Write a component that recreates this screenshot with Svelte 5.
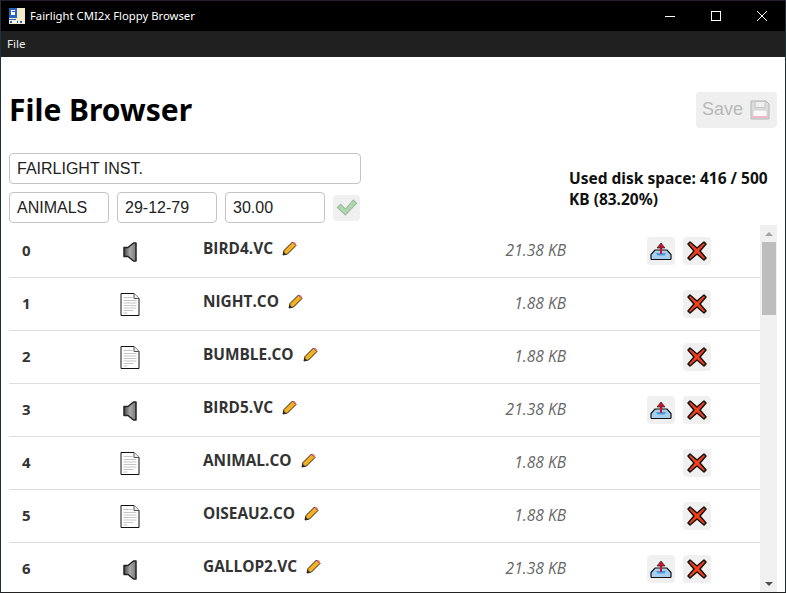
<script>
  const files = [
    { n: 0, name: 'BIRD4.VC', size: '21.38 KB', voice: true },
    { n: 1, name: 'NIGHT.CO', size: '1.88 KB', voice: false },
    { n: 2, name: 'BUMBLE.CO', size: '1.88 KB', voice: false },
    { n: 3, name: 'BIRD5.VC', size: '21.38 KB', voice: true },
    { n: 4, name: 'ANIMAL.CO', size: '1.88 KB', voice: false },
    { n: 5, name: 'OISEAU2.CO', size: '1.88 KB', voice: false },
    { n: 6, name: 'GALLOP2.VC', size: '21.38 KB', voice: true }
  ];
</script>

<div class="window">
  <header class="titlebar">
    <svg class="appicon" width="16" height="16" viewBox="0 0 16 16">
      <rect width="16" height="16" fill="#f3eccb" />
      <rect width="8" height="10" fill="#2a62c0" />
      <path d="M2 2h4v1H3v1h3v3H2M0 11h2v2H0zM4 11h3v1H4zM3 13h4v2H3zM9 14h2v1H9zM13 14h2v1h-2z" fill="#fff" />
      <path d="M0 11h7v1H0zM1 13h2v2H1zM8 13h1v2H8zM11 13h2v2h-2z" fill="#2a62c0" />
    </svg>
    <span class="wintitle">Fairlight CMI2x Floppy Browser</span>
    <div class="winbtns">
      <svg width="46" height="31" viewBox="0 0 46 31"><path d="M18 15.500h10" stroke="#fff" /></svg>
      <svg width="46" height="31" viewBox="0 0 46 31"><rect x="18.500" y="10.500" width="9" height="9" fill="none" stroke="#fff" /></svg>
      <svg width="46" height="31" viewBox="0 0 46 31"><path d="M18 10l10 10M28 10l-10 10" stroke="#fff" /></svg>
    </div>
  </header>
  <nav class="menubar"><span>File</span></nav>

  <main class="content">
    <div class="head">
      <h1>File Browser</h1>
      <button class="save" disabled>
        <span>Save</span>
        <svg width="20" height="20" viewBox="0 0 20 20">
          <path d="M1 1h15l3 3v15H1z" fill="#dcdcdc" stroke="#b4b4b4" />
          <rect x="5" y="1.500" width="10" height="6" fill="#efefef" stroke="#c4c4c4" />
          <rect x="3" y="10" width="14" height="8" fill="#f8f8f8" stroke="#cfcfcf" />
          <rect x="2" y="16" width="16" height="2" fill="#eeb8cc" />
        </svg>
      </button>
    </div>

    <div class="meta">
      <div class="fields">
        <input class="wide" value="FAIRLIGHT INST." />
        <div class="line">
          <input value="ANIMALS" />
          <input value="29-12-79" />
          <input value="30.00" />
          <button class="iconbtn check" disabled aria-label="Confirm">
            <svg width="22" height="17" viewBox="0 0 20 16">
              <path d="M1 8l3-3 4.500 4.500L16 1l3 3L8.500 15z" fill="#a9dba9" stroke="#a5b5a5" stroke-width="1" />
            </svg>
          </button>
        </div>
      </div>
      <p class="used">Used disk space: 416 / 500 KB (83.20%)</p>
    </div>

    <div class="listwrap">
      <div class="list">
        {#each files as f}
          <div class="row">
            <span class="idx">{f.n}</span>
            <span class="type">
              {#if f.voice}
                <svg width="14" height="20" viewBox="0 0 14 20">
                  <defs>
                    <linearGradient id="spk{f.n}" x1="0" x2="1" y1="0" y2="0">
                      <stop offset="0" stop-color="#444" /><stop offset="0.5" stop-color="#aaa" /><stop offset="1" stop-color="#777" />
                    </linearGradient>
                  </defs>
                  <path d="M1 5.500h4L10.500 1H13v18h-2.500L5 14.500H1z" fill="url(#spk{f.n})" stroke="#222" stroke-width="1.500" stroke-linejoin="round" />
                </svg>
              {:else}
                <svg width="20" height="23" viewBox="0 0 20 23">
                  <path d="M1 .5h13l5 5v17H1z" fill="#fff" stroke="#111" />
                  <path d="M14 .5v5h5" fill="#eee" stroke="#555" />
                  <path d="M3.500 4.500h9M3.500 7.500h13M3.500 10h13M3.500 12.500h13M3.500 15h13M3.500 17.500h10M3.500 20h4" stroke="#c6c6c6" />
                </svg>
              {/if}
            </span>
            <span class="name">
              <b>{f.name}</b>
              <svg width="15" height="15" viewBox="0 0 15 15">
                <path d="M1 14l1-4.500L10.500 1l3.500 3.500L5.500 13z" fill="#f4b01e" stroke="#222" stroke-width="1" stroke-linejoin="round" />
                <path d="M10.500 1.500l3 3 .8-1.500-2.300-2.300z" fill="#e2687e" />
                <path d="M1 14l.8-3 2.200 2.200z" fill="#222" />
              </svg>
            </span>
            <span class="size">{f.size}</span>
            <span class="actions">
              {#if f.voice}
                <button class="iconbtn" aria-label="Export">
                  <svg width="22" height="18" viewBox="0 0 22 18">
                    <path d="M1 16.500v-4L5 8h12l4 4.500v4q0 1-1 1H2q-1 0-1-1z" fill="#a8d0ee" stroke="#111" stroke-width="1.200" />
                    <path d="M6 11h10l-1.500 2.500h-7z" fill="#4a9be0" />
                    <path d="M11 12V5" stroke="#d3122a" stroke-width="2" />
                    <path d="M7 6l4-5 4 5z" fill="#d3122a" stroke="#222" stroke-width=".7" />
                  </svg>
                </button>
              {/if}
              <button class="iconbtn" aria-label="Delete">
                <svg width="20" height="20" viewBox="0 0 20 20">
                  <path d="M3 1l7 6 7-6 2 2-6 7 6 7-2 2-7-6-7 6-2-2 6-7-6-7z" fill="#f4401a" stroke="#111" stroke-width="1.500" stroke-linejoin="round" />
                </svg>
              </button>
            </span>
          </div>
        {/each}
      </div>
      <div class="scrollbar">
        <span class="arrow up"></span>
        <span class="thumb"></span>
        <span class="arrow down"></span>
      </div>
    </div>
  </main>
</div>

<style>
  :global(body) { margin: 0; background: #1d1d22; }
  .window { width: 786px; height: 593px; display: flex; flex-direction: column; overflow: hidden; box-sizing: border-box; border: 1px solid #1f2f3a; border-top-color: #2a1c30; border-bottom-color: #222; }
  .titlebar { height: 30px; flex: none; background: #000; display: flex; align-items: center; padding-left: 8px; }
  .appicon { flex: none; }
  .wintitle { margin-left: 5px; margin-bottom: 2px; color: #fff; font: 11.300px "Noto Sans", sans-serif; }
  .winbtns { margin-left: auto; display: flex; }
  .winbtns svg { display: block; }
  .menubar { height: 26px; flex: none; background: #202020; display: flex; align-items: center; padding: 0 0 2px 6px; box-sizing: border-box; color: #eee; font: 11.500px "Noto Sans", sans-serif; }
  .content { flex: 1; background: #fff; display: flex; flex-direction: column; padding: 0 8px; min-height: 0; }
  .head { display: flex; justify-content: space-between; align-items: center; padding-top: 34px; height: 37px; flex: none; }
  h1 { margin: 0; font: 700 30px/37px "Noto Sans", sans-serif; color: #000; }
  .save { height: 36px; width: 81px; border: none; border-radius: 4px; background: #efefef; color: #b8b8b8; font: 18px "Liberation Sans", sans-serif; display: flex; align-items: center; justify-content: center; gap: 7px; padding: 0 1px 0 0; }
  .meta { display: flex; margin-top: 25px; flex: none; }
  .fields { width: 352px; display: flex; flex-direction: column; gap: 8px; }
  input { box-sizing: border-box; height: 31px; width: 100px; border: 1px solid #c4c4c4; border-radius: 4px; padding: 0 7px; color: #222; background: #fff; font: 16px "Liberation Sans", sans-serif; outline: none; }
  .wide { width: 352px; }
  .line { display: flex; gap: 8px; align-items: center; }
  .used { margin: 15px 0 0 208px; width: 206px; font: 700 15.500px/21px "Noto Sans", sans-serif; color: #111; }
  .listwrap { display: flex; margin-top: 2px; flex: 1; min-height: 0; width: 768px; }
  .list { width: 751px; flex: none; overflow: hidden; }
  .row { height: 53px; box-sizing: border-box; display: flex; align-items: center; border-bottom: 1px solid #dedede; color: #333; font-family: "Open Sans", sans-serif; }
  .idx { width: 92px; flex: none; padding-left: 13px; box-sizing: border-box; font-weight: 700; font-size: 15px; line-height: 20px; padding-bottom: 2px; }
  .type { width: 58px; flex: none; display: flex; justify-content: center; padding-top: 1px; }
  .name { width: 252px; flex: none; margin-left: 44px; display: flex; align-items: center; gap: 9px; padding-bottom: 5px; }
  .name b { font-weight: 700; font-size: 15.400px; }
  .size { width: 111px; flex: none; text-align: right; font-style: italic; font-size: 15.600px; color: #666; padding-bottom: 3px; }
  .actions { margin-left: 81px; width: 64px; flex: none; display: flex; justify-content: flex-end; gap: 8px; }
  .iconbtn { width: 28px; height: 28px; padding: 0; border: none; border-radius: 4px; background: #f0f0f0; display: flex; align-items: center; justify-content: center; }
  .check { width: 27px; height: 26px; }
  .scrollbar { width: 17px; flex: none; background: #f0f0f0; display: flex; flex-direction: column; align-items: center; }
  .thumb { width: 14px; height: 73px; background: #bdbdbd; margin-top: 6px; }
  .arrow { width: 0; height: 0; border-left: 4px solid transparent; border-right: 4px solid transparent; }
  .up { border-bottom: 4px solid #a3a3a3; margin-top: 7px; }
  .down { border-top: 4px solid #505050; margin-top: auto; margin-bottom: 6px; }
</style>
